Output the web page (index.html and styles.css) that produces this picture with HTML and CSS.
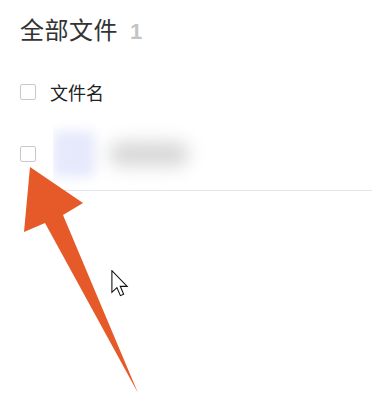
FILE: index.html
```html
<!DOCTYPE html>
<html lang="zh">
<head>
<meta charset="utf-8">
<link rel="stylesheet" href="styles.css">
</head>
<body>
<div class="page">
  <div class="title"><span class="title-text">全部文件</span><span class="count">1</span></div>
  <div class="list-head">
    <span class="checkbox"></span>
    <span class="head-label">文件名</span>
  </div>
  <div class="file-row">
    <span class="checkbox"></span>
    <div class="file-main">
      <div class="thumb"></div>
      <div class="name-blur"></div>
    </div>
  </div>
</div>
<svg class="arrow" width="372" height="400" viewBox="0 0 372 400">
  <polygon points="30,167 83,203 63,215 138,393 45,223 24,232" fill="#e65a29"/>
</svg>
<svg class="cursor" width="18" height="27" viewBox="0 0 13 20">
  <path d="M0.5,0.5 L0.5,16.5 L4.2,13 L6.8,19 L9.2,18 L6.7,12.1 L11.8,12.1 Z" fill="#fff" stroke="#111" stroke-width="0.8" stroke-linejoin="miter"/>
</svg>
</body>
</html>
```
FILE: styles.css
```css
html, body {
  margin: 0;
  padding: 0;
  background: #fff;
}
body {
  width: 372px;
  height: 400px;
  overflow: hidden;
  position: relative;
  font-family: "Noto Sans CJK SC", "Noto Sans", sans-serif;
}
.page {
  display: flex;
  flex-direction: column;
  padding-left: 20px;
}
.title {
  display: flex;
  align-items: baseline;
  gap: 12px;
  padding-top: 14px;
  height: 39px;
  line-height: 30px;
}
.title-text {
  font-size: 24px;
  color: #333;
  letter-spacing: 0.5px;
}
.count {
  font-size: 22px;
  color: #c4c4c4;
  font-weight: bold;
  font-family: "Liberation Sans", sans-serif;
}
.list-head {
  display: flex;
  align-items: center;
  gap: 14px;
  height: 40px;
  margin-top: 19px;
}
.head-label {
  font-size: 18px;
  color: #222;
  line-height: 24px;
}
.checkbox {
  width: 14px;
  height: 14px;
  border: 1px solid #c9c9c9;
  border-radius: 2px;
  background: #fff;
  flex: none;
}
.file-row {
  display: flex;
  align-items: center;
  gap: 17px;
  height: 75px;
  margin-top: 4px;
}
.file-main {
  flex: 1;
  height: 100%;
  display: flex;
  align-items: center;
  gap: 14px;
  border-bottom: 1px solid #e6e6ea;
  box-sizing: border-box;
  overflow: hidden;
  padding-top: 2px;
}
.thumb {
  width: 42px;
  height: 46px;
  background: #e6e9fc;
  border-radius: 6px;
  filter: blur(6px);
  flex: none;
}
.name-blur {
  width: 80px;
  height: 24px;
  background: #d6d6d6;
  border-radius: 12px;
  filter: blur(9px);
  flex: none;
}
.arrow {
  position: absolute;
  left: 0;
  top: 0;
}
.cursor {
  position: absolute;
  left: 111px;
  top: 270px;
}
```
